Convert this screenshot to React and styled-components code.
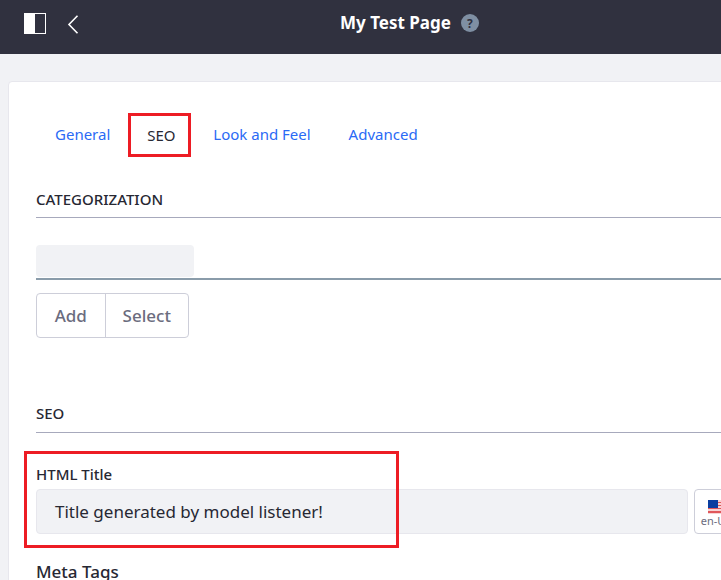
import React from 'react'
import styled, { createGlobalStyle } from 'styled-components'

const GlobalStyle = createGlobalStyle`
html, body {
  margin: 0;
  height: 580px;
  overflow: hidden;
  background: #f1f2f5;
  font-family: "Noto Sans", "Open Sans", sans-serif;
  color: #272833;
}
`

const Page = styled.div`
width: 721px;
height: 580px;
overflow: hidden;
display: flex;
flex-direction: column;
`

const Header = styled.header`
flex: none;
box-sizing: border-box;
height: 54px;
background: #30313f;
display: flex;
align-items: center;
padding: 0 0 8px 24px;
gap: 21px;
`

const IconButton = styled.span`
display: flex;
margin-top: ${p => p.$nudge || 0}px;
`

const TitleWrap = styled.div`
flex: 1;
display: flex;
align-items: center;
justify-content: center;
gap: 10px;
margin-left: -2px;
`

const PageTitle = styled.h1`
margin: 0;
font-size: 17px;
font-weight: 700;
line-height: 24px;
color: #fff;
`

const HelpBadge = styled.span`
width: 18px;
height: 18px;
border-radius: 50%;
background: #7f8fa3;
color: #30313f;
font-size: 12px;
font-weight: 700;
display: flex;
align-items: center;
justify-content: center;
`

const Card = styled.main`
flex: none;
width: 760px;
height: 600px;
box-sizing: border-box;
margin: 27px 0 0 8px;
background: #fff;
border: 1px solid #e7e7ed;
border-radius: 4px;
padding: 31px 0 0 27px;
`

const Tabs = styled.nav`
display: flex;
height: 44px;
margin-bottom: 32px;
`

const Tab = styled.a`
box-sizing: border-box;
height: 44px;
padding: 0 19px 2px;
display: flex;
align-items: center;
font-size: 15px;
color: #2a6af5;
&:first-child {
  padding-right: 18px;
}
`

const ActiveTab = styled(Tab)`
width: 63px;
padding: 0 0 0 16px;
margin-right: 3px;
border: 3px solid #ed1c24;
color: #272833;
`

const SectionTitle = styled.h2`
margin: 0;
padding-bottom: ${p => p.$pb || 8}px;
font-size: 15px;
font-weight: 500;
line-height: 20px;
color: #272833;
border-bottom: 1px solid #a7a9bc;
`

const TagInput = styled.div`
margin-top: 27px;
height: 33px;
border-bottom: 2px solid #8a9caa;
`

const TagFill = styled.div`
width: 158px;
height: 32px;
background: #f1f2f5;
border-radius: 4px;
`

const ButtonGroup = styled.div`
display: flex;
width: 153px;
margin: 13px 0 65px;
height: 45px;
box-sizing: border-box;
border: 1px solid #cdced9;
border-radius: 4px;
`

const GroupButton = styled.span`
display: flex;
align-items: center;
justify-content: center;
width: ${p => p.$w}px;
padding-bottom: 1px;
font-size: 17px;
font-weight: 500;
color: #6b6c7e;
& + & {
  border-left: 1px solid #cdced9;
}
`

const Field = styled.div`
margin-top: 31px;
position: relative;
`

const RedFrame = styled.div`
position: absolute;
left: -12px;
top: -13px;
box-sizing: border-box;
width: 375px;
height: 97px;
border: 3px solid #ed1c24;
pointer-events: none;
`

const FieldLabel = styled.label`
display: block;
font-size: 15px;
font-weight: 500;
line-height: 20px;
color: #272833;
margin-bottom: 5px;
`

const FieldRow = styled.div`
display: flex;
gap: 6px;
`

const TextInput = styled.div`
box-sizing: border-box;
width: 652px;
height: 45px;
background: #f1f2f5;
border: 1px solid #e7e7ed;
border-radius: 4px;
padding: 0 18px;
display: flex;
align-items: center;
font-size: 17px;
color: #272833;
`

const LangButton = styled.div`
box-sizing: border-box;
width: 44px;
height: 45px;
border: 1px solid #cdced9;
border-radius: 4px;
display: flex;
flex-direction: column;
align-items: center;
padding-top: 10px;
font-size: 11px;
line-height: 14px;
color: #6b6c7e;
`

const SubHeading = styled.h3`
margin: 26px 0 0;
font-size: 17px;
font-weight: 500;
line-height: 24px;
color: #272833;
`

const PanelIcon = () => (
  <svg width="22" height="21" viewBox="0 0 22 21">
    <rect x="0.5" y="0.5" width="21" height="20" fill="none" stroke="#fff" />
    <rect x="0" y="0" width="11" height="21" fill="#fff" />
  </svg>
)

const BackIcon = () => (
  <svg width="12" height="19" viewBox="0 0 12 19">
    <path d="M10.5 0.7 L2 9.5 L10.5 18.3" fill="none" stroke="#fff" strokeWidth="1.6" />
  </svg>
)

const Flag = () => (
  <svg width="16" height="14" viewBox="0 0 16 14" style={{ flex: 'none' }}>
    <rect width="16" height="14" fill="#f6d5d5" />
    <rect y="2" width="16" height="1" fill="#e0575b" />
    <rect y="5" width="16" height="1" fill="#e0575b" />
    <rect y="8" width="16" height="1" fill="#e0575b" />
    <rect y="11" width="16" height="2" fill="#e0575b" />
    <rect width="10" height="8" fill="#0b3ea0" />
  </svg>
)

export default function App() {
  return (
    <Page>
      <GlobalStyle />
      <Header>
        <IconButton><PanelIcon /></IconButton>
        <IconButton $nudge={2}><BackIcon /></IconButton>
        <TitleWrap>
          <PageTitle>My Test Page</PageTitle>
          <HelpBadge>?</HelpBadge>
        </TitleWrap>
      </Header>
      <Card>
        <Tabs>
          <Tab>General</Tab>
          <ActiveTab>SEO</ActiveTab>
          <Tab>Look and Feel</Tab>
          <Tab>Advanced</Tab>
        </Tabs>
        <SectionTitle>CATEGORIZATION</SectionTitle>
        <TagInput><TagFill /></TagInput>
        <ButtonGroup>
          <GroupButton $w={68}>Add</GroupButton>
          <GroupButton $w={83}>Select</GroupButton>
        </ButtonGroup>
        <SectionTitle $pb={9}>SEO</SectionTitle>
        <Field>
          <RedFrame />
          <FieldLabel>HTML Title</FieldLabel>
          <FieldRow>
            <TextInput>Title generated by model listener!</TextInput>
            <LangButton>
              <Flag />
              en-US
            </LangButton>
          </FieldRow>
        </Field>
        <SubHeading>Meta Tags</SubHeading>
      </Card>
    </Page>
  )
}
